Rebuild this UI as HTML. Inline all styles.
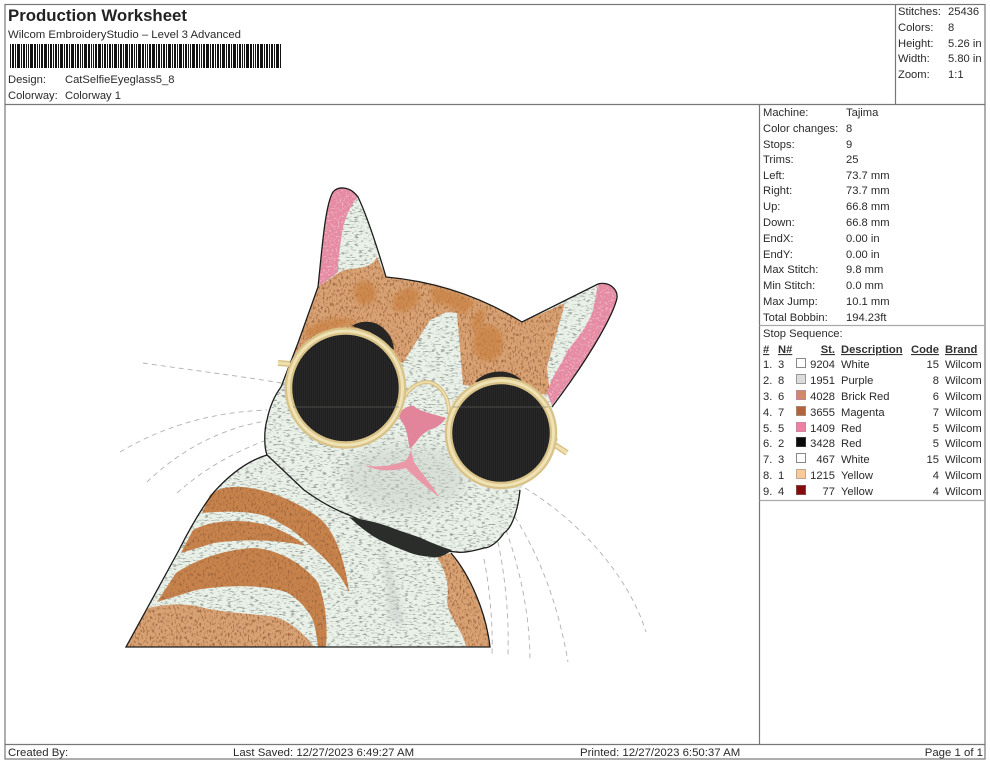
<!DOCTYPE html>
<html><head><meta charset="utf-8"><title>Production Worksheet</title>
<style>
html,body{margin:0;padding:0;background:#fff;width:990px;height:762px;overflow:hidden}
svg{display:block}
text{font-family:"Liberation Sans",sans-serif;font-size:11.2px;fill:#2a2a2a}
.b{font-weight:bold;fill:#222}
.u{font-weight:bold;text-decoration:underline;fill:#333}
.e{text-anchor:end}
.f{font-size:11.4px}
.w{fill:none;stroke:#b0b0b0;stroke-width:.9;stroke-dasharray:5 4}
</style></head><body>
<svg width="990" height="762" viewBox="0 0 990 762" xmlns="http://www.w3.org/2000/svg">
<defs>
<filter id="fw" color-interpolation-filters="sRGB" x="0" y="0" width="1" height="1"><feTurbulence type="fractalNoise" baseFrequency=".22 .7" numOctaves="2" seed="3" result="n"/><feColorMatrix in="n" values="0 0 0 0 .6 0 0 0 0 .63 0 0 0 0 .6 5 0 0 0 -2.7" result="m"/><feComposite in="m" in2="SourceGraphic" operator="in" result="c"/><feMerge><feMergeNode in="SourceGraphic"/><feMergeNode in="c"/></feMerge></filter>
<filter id="fo" color-interpolation-filters="sRGB" x="0" y="0" width="1" height="1"><feTurbulence type="fractalNoise" baseFrequency=".6 .3" numOctaves="2" seed="8" result="n"/><feColorMatrix in="n" values="0 0 0 0 .62 0 0 0 0 .4 0 0 0 0 .24 4 0 0 0 -2.05" result="m"/><feComposite in="m" in2="SourceGraphic" operator="in" result="c"/><feMerge><feMergeNode in="SourceGraphic"/><feMergeNode in="c"/></feMerge></filter>
<filter id="fp" color-interpolation-filters="sRGB" x="0" y="0" width="1" height="1"><feTurbulence type="fractalNoise" baseFrequency=".5" numOctaves="2" seed="5" result="n"/><feColorMatrix in="n" values="0 0 0 0 .95 0 0 0 0 .72 0 0 0 0 .78 4 0 0 0 -2.05" result="m"/><feComposite in="m" in2="SourceGraphic" operator="in" result="c"/><feMerge><feMergeNode in="SourceGraphic"/><feMergeNode in="c"/></feMerge></filter>
<filter id="bl" x="-30%" y="-30%" width="160%" height="160%"><feGaussianBlur stdDeviation="6"/></filter>
<filter id="bs" x="-30%" y="-30%" width="160%" height="160%"><feGaussianBlur stdDeviation="2.500"/></filter>
<pattern id="lens" width="2" height="2" patternUnits="userSpaceOnUse"><rect width="2" height="2" fill="#202020"/><rect width=".7" height="2" fill="#2c2c2c"/></pattern>
</defs>

<!-- whiskers -->
<path class="w" d="M143 363 C190 370 240 376 281 383"/>
<path class="w" d="M120 452 C165 425 215 412 267 410"/>
<path class="w" d="M147 482 C180 450 222 428 266 421"/>
<path class="w" d="M177 493 C205 468 235 452 264 441"/>
<path class="w" d="M525 488 C585 525 630 580 646 632"/>
<path class="w" d="M515 517 C545 565 560 615 568 662"/>
<path class="w" d="M506 530 C522 575 530 620 530 662"/>
<path class="w" d="M498 542 C506 580 509 620 508 655"/>
<path class="w" d="M484 559 C490 590 493 625 492 655"/>

<!-- body -->
<path d="M267 455 C250 460 232 472 214 492 C200 510 188 532 179 550 L126 647 L490 647 C486 612 470 575 451 553 Z" fill="#e9f1e9" filter="url(#fw)"/>
<path d="M210 495 C218 488 228 487 238 487 C262 487 295 500 318 517 C335 530 345 560 349 592 C340 572 322 555 304 540 C295 532 290 528 283 525 C272 518 268 516 262 515 C245 511 225 511 202 513 Z" fill="#c8834c" filter="url(#fo)"/>
<path d="M181 553 L193 530 C215 518 250 519 273 527 C285 532 297 538 306 546 C285 541 250 538 214 543 Z" fill="#c8834c" filter="url(#fo)"/>
<path d="M157 602 L176 573 C195 560 225 549 255 548 C280 550 305 565 318 583 C325 600 328 625 326 647 L318 647 C316 630 314 620 309 613 C300 600 290 594 286 592 C260 584 225 585 196 590 Z" fill="#c8834c" filter="url(#fo)"/>
<path d="M126 647 L148 608 C165 604 186 603 200 607 C225 613 255 614 276 617 C290 622 304 633 314 647 Z" fill="#d8a274" filter="url(#fo)"/>
<path d="M437 557 L451 553 C470 575 486 612 490 647 L466 647 C463 630 447 615 447 600 C450 585 445 570 437 557 Z" fill="#d8a274" filter="url(#fo)"/>
<path d="M378 540 C392 560 398 590 405 625 L388 622 C388 595 385 565 378 540 Z" fill="#c4cbc4" opacity=".45" filter="url(#bs)"/>
<path d="M267 455 C250 460 232 472 214 492 C200 510 188 532 179 550 L126 647 L490 647 C486 612 470 575 451 553" fill="none" stroke="#1c1c1c" stroke-width="1.3"/>

<!-- head -->
<path id="h" d="M318 287 C322 250 325 205 333 192 C338 186 350 186 358 197 C368 218 378 250 386 277 C420 280 470 290 522 322 L598 284 C610 281 618 290 617 298 C614 312 595 350 552 407 L558 440 L520 490 C518 510 512 528 504 533 C498 542 490 548 484 548 C470 552 462 553 456 552 C435 550 420 548 404 540 C385 532 365 522 349 515 C330 508 315 498 304 490 L267 455 C264 447 264 430 267 420 C270 405 275 395 281 387 L298 343 Z" fill="#e9f1e9" filter="url(#fw)"/>
<ellipse cx="405" cy="478" rx="62" ry="34" fill="#c6cdc5" opacity=".45" filter="url(#bl)"/>
<!-- orange head -->
<path d="M318 287 L340 272 C350 266 370 272 377 257 L386 277 C420 280 470 290 522 322 L565 303 L547 367 L550 395 L463 385 L457 313 L447 312 L430 320 L403 363 L340 345 L292 360 L298 343 Z" fill="#d8a274" filter="url(#fo)"/>
<g fill="#c9803f" opacity=".7" filter="url(#bs)">
<ellipse cx="365" cy="293" rx="11" ry="12"/>
<ellipse cx="406" cy="300" rx="15" ry="10" transform="rotate(-35 406 300)"/>
<path d="M432 286 C450 290 470 298 475 303 C468 310 465 315 462 314 C450 305 440 303 432 302 Z"/>
<ellipse cx="478" cy="320" rx="5" ry="12" transform="rotate(25 478 320)"/>
<ellipse cx="488" cy="343" rx="15" ry="18"/>
<path d="M305 330 C320 318 345 315 360 322 L330 330 L305 340 Z"/>
</g>
<!-- ears -->
<path d="M318 287 C322 250 325 205 333 192 C338 186 350 186 358 197 C350 205 345 220 343 227 C340 245 338 260 338 272 Z" fill="#e58aa3" filter="url(#fp)"/>
<path d="M598 284 C610 281 618 290 617 298 C614 312 595 350 552 405 L547 393 C552 375 560 368 568 350 C580 335 592 320 594 305 Z" fill="#e58aa3" filter="url(#fp)"/>
<!-- outline -->
<path d="M318 287 C322 250 325 205 333 192 C338 186 350 186 358 197 C368 218 378 250 386 277 C420 280 470 290 522 322 L598 284 C610 281 618 290 617 298 C614 312 595 350 552 407" fill="none" stroke="#1c1c1c" stroke-width="1.3"/>
<path d="M318 287 L298 343 L281 387 C275 395 270 405 267 420 C264 430 264 447 267 455 L304 490 C315 498 330 508 349 515 C365 522 385 532 404 540 C420 548 435 550 456 552 C462 553 470 552 484 548 C490 548 498 542 504 533 C512 528 518 510 520 490" fill="none" stroke="#1c1c1c" stroke-width="1.3"/>
<!-- collar -->
<path d="M349 517 C365 520 376 522 387 526 C400 531 410 534 421 538 C432 543 442 547 452 550 C445 556 438 558 432 557 C422 556 415 555 408 552 C398 548 390 545 380 540 C370 535 360 527 349 517 Z" fill="#2b2d2a"/>
<!-- brows -->
<path d="M352 326 C360 320 375 320 383 328 C390 334 393 340 394 350 L370 332 Z" fill="#272624"/>
<path d="M475 382 C485 370 510 366 523 382 Z" fill="#272624"/>
<!-- nose / mouth -->
<path d="M399 413 C404 408 410 405 414 406 C420 412 434 414 446 418 C442 424 436 428 432 429 C426 431 420 436 417 441 L410 449 C408 442 408 430 402 422 C400 418 398 416 399 413 Z" fill="#e2859b"/>
<path d="M364 465 C375 468 392 466 405 461 C408 458 410 454 411 450 L414 462 C422 474 432 485 439 497 C428 488 415 478 406 468 C395 471 378 472 364 465 Z" fill="#ea97a8"/>
<!-- glasses -->
<g fill="none" stroke-linecap="butt">
<path d="M278 363 L290 364" stroke="#d9c288" stroke-width="6"/>
<path d="M278 363 L290 364" stroke="#efe0b0" stroke-width="3"/>
<path d="M552 443 L567 453" stroke="#d9c288" stroke-width="6"/>
<path d="M552 443 L567 453" stroke="#efe0b0" stroke-width="3"/>
<path d="M403 400 C408 388 418 382 428 382 C440 384 449 396 449 413" stroke="#d9c288" stroke-width="4"/>
<path d="M403 400 C408 388 418 382 428 382 C440 384 449 396 449 413" stroke="#efe0b0" stroke-width="1.600"/>
</g>
<circle cx="345.500" cy="388" r="57" fill="url(#lens)" stroke="#d9c288" stroke-width="7.500"/>
<circle cx="345.500" cy="388" r="57" fill="none" stroke="#efe2b4" stroke-width="3"/>
<circle cx="501" cy="433" r="52.500" fill="url(#lens)" stroke="#d9c288" stroke-width="7.500"/>
<circle cx="501" cy="433" r="52.500" fill="none" stroke="#efe2b4" stroke-width="3"/>
<path d="M293 407 H399 M453 407 H548" stroke="#6e6e66" stroke-width=".6"/>

<!-- frame -->
<g stroke="#777" stroke-width="1.2" fill="none">
<rect x="5" y="4.500" width="980" height="754.500"/>
<path d="M5 104.500 H985 M895.500 4.500 V104.500 M759.500 104.500 V744.500 M5 744.500 H985"/>
<path d="M759.500 325.500 H985 M759.500 500.500 H985" stroke="#aaa"/>
</g>

<!-- header -->
<text x="8" y="21" class="b" style="font-size:16.500px" textLength="179" lengthAdjust="spacingAndGlyphs">Production Worksheet</text>
<text x="8" y="38" textLength="233" lengthAdjust="spacingAndGlyphs">Wilcom EmbroideryStudio – Level 3 Advanced</text>
<line x1="10" y1="56" x2="281" y2="56" stroke="#111" stroke-width="24" stroke-dasharray="1 1 2 1 1 1 3 1 1 1 2 1 1 1 1 1 3 1 2 1 1 1 1 1 2 1 3 1 1 1 2 1 1 1 2 1 1 1 3 1"/>
<text x="8" y="83">Design:</text><text x="65" y="83">CatSelfieEyeglass5_8</text>
<text x="8" y="99">Colorway:</text><text x="65" y="99">Colorway 1</text>

<text x="898" y="15">Stitches:</text><text x="948" y="15">25436</text>
<text x="898" y="31">Colors:</text><text x="948" y="31">8</text>
<text x="898" y="47">Height:</text><text x="948" y="47">5.26 in</text>
<text x="898" y="62">Width:</text><text x="948" y="62">5.80 in</text>
<text x="898" y="78">Zoom:</text><text x="948" y="78">1:1</text>

<!-- machine info -->
<text x="763" y="116">Machine:</text><text x="846" y="116">Tajima</text>
<text x="763" y="132">Color changes:</text><text x="846" y="132">8</text>
<text x="763" y="148">Stops:</text><text x="846" y="148">9</text>
<text x="763" y="163">Trims:</text><text x="846" y="163">25</text>
<text x="763" y="179">Left:</text><text x="846" y="179">73.7 mm</text>
<text x="763" y="194">Right:</text><text x="846" y="194">73.7 mm</text>
<text x="763" y="210">Up:</text><text x="846" y="210">66.8 mm</text>
<text x="763" y="226">Down:</text><text x="846" y="226">66.8 mm</text>
<text x="763" y="258">EndY:</text><text x="846" y="258">0.00 in</text>
<text x="763" y="242">EndX:</text><text x="846" y="242">0.00 in</text>
<text x="763" y="273">Max Stitch:</text><text x="846" y="273">9.8 mm</text>
<text x="763" y="289">Min Stitch:</text><text x="846" y="289">0.0 mm</text>
<text x="763" y="305">Max Jump:</text><text x="846" y="305">10.1 mm</text>
<text x="763" y="321">Total Bobbin:</text><text x="846" y="321">194.23ft</text>
<text x="763" y="337">Stop Sequence:</text>

<!-- stop table -->
<text x="763" y="353" class="u">#</text><text x="778" y="353" class="u">N#</text><text x="835" y="353" class="u e">St.</text><text x="841" y="353" class="u">Description</text><text x="911" y="353" class="u">Code</text><text x="945" y="353" class="u">Brand</text>

<text x="763" y="368">1.</text><text x="778" y="368">3</text><rect x="796.500" y="358.500" width="9" height="9" fill="#fff" stroke="#888"/><text x="835" y="368" class="e">9204</text><text x="841" y="368">White</text><text x="939" y="368" class="e">15</text><text x="945" y="368">Wilcom</text>
<text x="763" y="384">2.</text><text x="778" y="384">8</text><rect x="796.500" y="374.500" width="9" height="9" fill="#dcdcdc" stroke="#999"/><text x="835" y="384" class="e">1951</text><text x="841" y="384">Purple</text><text x="939" y="384" class="e">8</text><text x="945" y="384">Wilcom</text>
<text x="763" y="400">3.</text><text x="778" y="400">6</text><rect x="796.500" y="390.500" width="9" height="9" fill="#d08a68" stroke="#b89"/><text x="835" y="400" class="e">4028</text><text x="841" y="400">Brick Red</text><text x="939" y="400" class="e">6</text><text x="945" y="400">Wilcom</text>
<text x="763" y="416">4.</text><text x="778" y="416">7</text><rect x="796.500" y="406.500" width="9" height="9" fill="#b5623a" stroke="#a87"/><text x="835" y="416" class="e">3655</text><text x="841" y="416">Magenta</text><text x="939" y="416" class="e">7</text><text x="945" y="416">Wilcom</text>
<text x="763" y="432">5.</text><text x="778" y="432">5</text><rect x="796.500" y="422.500" width="9" height="9" fill="#ee7fa5" stroke="#c89"/><text x="835" y="432" class="e">1409</text><text x="841" y="432">Red</text><text x="939" y="432" class="e">5</text><text x="945" y="432">Wilcom</text>
<text x="763" y="447">6.</text><text x="778" y="447">2</text><rect x="796.500" y="437.500" width="9" height="9" fill="#0a0a0a" stroke="#333"/><text x="835" y="447" class="e">3428</text><text x="841" y="447">Red</text><text x="939" y="447" class="e">5</text><text x="945" y="447">Wilcom</text>
<text x="763" y="463">7.</text><text x="778" y="463">3</text><rect x="796.500" y="453.500" width="9" height="9" fill="#fff" stroke="#888"/><text x="835" y="463" class="e">467</text><text x="841" y="463">White</text><text x="939" y="463" class="e">15</text><text x="945" y="463">Wilcom</text>
<text x="763" y="479">8.</text><text x="778" y="479">1</text><rect x="796.500" y="469.500" width="9" height="9" fill="#fbc996" stroke="#ba9"/><text x="835" y="479" class="e">1215</text><text x="841" y="479">Yellow</text><text x="939" y="479" class="e">4</text><text x="945" y="479">Wilcom</text>
<text x="763" y="495">9.</text><text x="778" y="495">4</text><rect x="796.500" y="485.500" width="9" height="9" fill="#850c0c" stroke="#844"/><text x="835" y="495" class="e">77</text><text x="841" y="495">Yellow</text><text x="939" y="495" class="e">4</text><text x="945" y="495">Wilcom</text>

<!-- footer -->
<text x="8" y="756" class="f">Created By:</text>
<text x="233" y="756" class="f">Last Saved: 12/27/2023 6:49:27 AM</text>
<text x="580" y="756" class="f">Printed: 12/27/2023 6:50:37 AM</text>
<text x="983" y="756" class="e f">Page 1 of 1</text>
</svg>
</body></html>
